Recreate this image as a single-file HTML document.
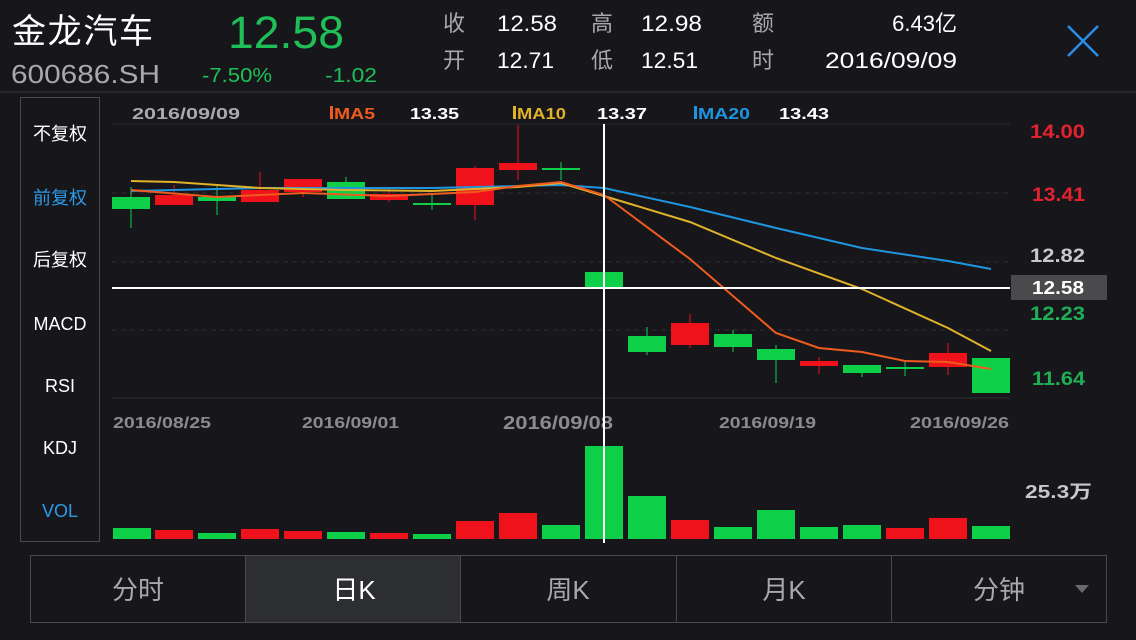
<!DOCTYPE html>
<html><head><meta charset="utf-8"><style>
html,body{margin:0;padding:0;background:#17171b;}
svg{display:block}
text{font-family:"Liberation Sans","Noto Sans CJK SC",sans-serif;}
</style></head><body>
<svg width="1136" height="640" viewBox="0 0 1136 640" xmlns="http://www.w3.org/2000/svg">
<rect width="1136" height="640" fill="#17171b"/>
<!-- header -->
<text x="12" y="43" font-size="34" fill="#fff" textLength="141">金龙汽车</text>
<text x="11" y="83" font-size="26" fill="#a8a9ad" textLength="149" lengthAdjust="spacingAndGlyphs">600686.SH</text>
<text x="228" y="48" font-size="45" fill="#1fbf58" textLength="116" lengthAdjust="spacingAndGlyphs">12.58</text>
<text x="202" y="82" font-size="20" fill="#1fbf58" textLength="70" lengthAdjust="spacingAndGlyphs">-7.50%</text>
<text x="325" y="82" font-size="20" fill="#1fbf58" textLength="52" lengthAdjust="spacingAndGlyphs">-1.02</text>
<g font-size="22">
<text x="443" y="31" fill="#a8a9ad">收</text><text x="497" y="31" fill="#fff" textLength="60" lengthAdjust="spacingAndGlyphs">12.58</text>
<text x="443" y="68" fill="#a8a9ad">开</text><text x="497" y="68" fill="#fff" textLength="57" lengthAdjust="spacingAndGlyphs">12.71</text>
<text x="591" y="31" fill="#a8a9ad">高</text><text x="641" y="31" fill="#fff" textLength="61" lengthAdjust="spacingAndGlyphs">12.98</text>
<text x="591" y="68" fill="#a8a9ad">低</text><text x="641" y="68" fill="#fff" textLength="57" lengthAdjust="spacingAndGlyphs">12.51</text>
<text x="752" y="31" fill="#a8a9ad">额</text><text x="957" y="31" fill="#fff" text-anchor="end">6.43亿</text>
<text x="752" y="68" fill="#a8a9ad">时</text><text x="825" y="68" fill="#fff" textLength="132" lengthAdjust="spacingAndGlyphs">2016/09/09</text>
</g>
<path d="M1068 26 L1098 56 M1098 26 L1068 56" stroke="#2a8de8" stroke-width="2.5"/>
<line x1="0" y1="92" x2="1136" y2="92" stroke="#3a3a3e" stroke-width="1"/>
<!-- left panel -->
<rect x="20.5" y="97.5" width="79" height="444" fill="none" stroke="#4a4a4e"/>
<g font-size="18" fill="#fff" text-anchor="middle">
<text x="60" y="140">不复权</text>
<text x="60" y="204" fill="#2a9be8">前复权</text>
<text x="60" y="266">后复权</text>
<text x="60" y="330">MACD</text>
<text x="60" y="392">RSI</text>
<text x="60" y="454">KDJ</text>
<text x="60" y="517" fill="#2a9be8">VOL</text>
</g>
<!-- legend -->
<g font-size="16" font-weight="bold" lengthAdjust="spacingAndGlyphs">
<text x="132" y="119" fill="#a8a9ad" textLength="108" lengthAdjust="spacingAndGlyphs">2016/09/09</text>
<rect x="330" y="106" width="3" height="13" fill="#ef5a1f"/><text x="334" y="119" fill="#ef5a1f" textLength="41" lengthAdjust="spacingAndGlyphs">MA5</text>
<text x="410" y="119" fill="#fff" textLength="49" lengthAdjust="spacingAndGlyphs">13.35</text>
<rect x="513" y="106" width="3" height="13" fill="#e0b22a"/><text x="517" y="119" fill="#e0b22a" textLength="49" lengthAdjust="spacingAndGlyphs">MA10</text>
<text x="597" y="119" fill="#fff" textLength="50" lengthAdjust="spacingAndGlyphs">13.37</text>
<rect x="694" y="106" width="3" height="13" fill="#1f95e0"/><text x="698" y="119" fill="#1f95e0" textLength="52" lengthAdjust="spacingAndGlyphs">MA20</text>
<text x="779" y="119" fill="#fff" textLength="50" lengthAdjust="spacingAndGlyphs">13.43</text>
</g>
<!-- grid -->
<line x1="112" y1="124" x2="1010" y2="124" stroke="#2a2a2e"/>
<g stroke="#2e2e33" stroke-dasharray="5,4">
<line x1="112" y1="193" x2="1010" y2="193"/>
<line x1="112" y1="262" x2="1010" y2="262"/>
<line x1="112" y1="330" x2="1010" y2="330"/>
</g>
<line x1="112" y1="398" x2="1010" y2="398" stroke="#2e2e33"/>
<!-- price labels -->
<g font-size="19" font-weight="bold">
<text x="1030" y="138" fill="#e3222f" textLength="55" lengthAdjust="spacingAndGlyphs">14.00</text>
<text x="1032" y="201" fill="#e3222f" textLength="53" lengthAdjust="spacingAndGlyphs">13.41</text>
<text x="1030" y="262" fill="#c8c8cc" textLength="55" lengthAdjust="spacingAndGlyphs">12.82</text>
<text x="1030" y="320" fill="#1fae55" textLength="55" lengthAdjust="spacingAndGlyphs">12.23</text>
<text x="1032" y="385" fill="#1fae55" textLength="53" lengthAdjust="spacingAndGlyphs">11.64</text>
</g>
<rect x="1011" y="275" width="96" height="25" fill="#4a4a4c"/>
<text x="1032" y="294" font-size="18" font-weight="bold" fill="#fff" textLength="52" lengthAdjust="spacingAndGlyphs">12.58</text>
<!-- candles -->
<g stroke-width="1">
<g fill="#0ed048" stroke="#0ed048">
<line x1="131" y1="187" x2="131" y2="228"/><rect x="112" y="197" width="38" height="12" stroke="none"/>
<line x1="217" y1="185" x2="217" y2="215"/><rect x="198" y="197" width="38" height="4" stroke="none"/>
<line x1="346" y1="177" x2="346" y2="199"/><rect x="327" y="182" width="38" height="17" stroke="none"/>
<line x1="432" y1="195" x2="432" y2="210"/><rect x="413" y="203" width="38" height="2" stroke="none"/>
<line x1="561" y1="162" x2="561" y2="180"/><rect x="542" y="168" width="38" height="2" stroke="none"/>
<rect x="585" y="272" width="38" height="15" stroke="none"/>
<line x1="647" y1="327" x2="647" y2="355"/><rect x="628" y="336" width="38" height="16" stroke="none"/>
<line x1="733" y1="330" x2="733" y2="352"/><rect x="714" y="334" width="38" height="13" stroke="none"/>
<line x1="776" y1="345" x2="776" y2="383"/><rect x="757" y="349" width="38" height="11" stroke="none"/>
<line x1="862" y1="365" x2="862" y2="377"/><rect x="843" y="365" width="38" height="8" stroke="none"/>
<line x1="905" y1="361" x2="905" y2="376"/><rect x="886" y="367" width="38" height="2" stroke="none"/>
<rect x="972" y="358" width="38" height="35" stroke="none"/>
</g>
<g fill="#f0121b" stroke="#f0121b">
<line x1="174" y1="185" x2="174" y2="205"/><rect x="155" y="195" width="38" height="10" stroke="none"/>
<line x1="260" y1="172" x2="260" y2="202"/><rect x="241" y="190" width="38" height="12" stroke="none"/>
<line x1="303" y1="179" x2="303" y2="197"/><rect x="284" y="179" width="38" height="13" stroke="none"/>
<line x1="389" y1="188" x2="389" y2="202"/><rect x="370" y="194" width="38" height="6" stroke="none"/>
<line x1="475" y1="166" x2="475" y2="220"/><rect x="456" y="168" width="38" height="37" stroke="none"/>
<line x1="518" y1="125" x2="518" y2="180"/><rect x="499" y="163" width="38" height="7" stroke="none"/>
<line x1="690" y1="314" x2="690" y2="348"/><rect x="671" y="323" width="38" height="22" stroke="none"/>
<line x1="819" y1="357" x2="819" y2="374"/><rect x="800" y="361" width="38" height="5" stroke="none"/>
<line x1="948" y1="343" x2="948" y2="375"/><rect x="929" y="353" width="38" height="14" stroke="none"/>
</g>
</g>
<!-- MAs -->
<g fill="none" stroke-width="2">
<polyline stroke="#1f95e0" points="131,191 260,188 432,188 518,186 561,185 604,188 690,207 776,228 862,248 948,261 991,269"/>
<polyline stroke="#e0b22a" points="131,181 174,182 260,188 346,190 432,191 518,187 561,183 604,196 690,222 776,258 862,289 948,328 991,351"/>
<polyline stroke="#ef5a1f" points="131,190 217,197 303,193 389,196 475,192 518,186 561,182 604,195 690,259 776,333 819,348 862,352 905,361 948,362 991,369"/>
</g>
<!-- dates -->
<g font-size="16" font-weight="bold" fill="#8a8b90">
<text x="113" y="428" textLength="98" lengthAdjust="spacingAndGlyphs">2016/08/25</text>
<text x="302" y="428" textLength="97" lengthAdjust="spacingAndGlyphs">2016/09/01</text>
<text x="503" y="429" font-size="18" textLength="110" lengthAdjust="spacingAndGlyphs">2016/09/08</text>
<text x="719" y="428" textLength="97" lengthAdjust="spacingAndGlyphs">2016/09/19</text>
<text x="910" y="428" textLength="99" lengthAdjust="spacingAndGlyphs">2016/09/26</text>
</g>
<!-- volume -->
<g>
<rect x="113" y="528" width="38" height="11" fill="#0ed048"/>
<rect x="155" y="530" width="38" height="9" fill="#f0121b"/>
<rect x="198" y="533" width="38" height="6" fill="#0ed048"/>
<rect x="241" y="529" width="38" height="10" fill="#f0121b"/>
<rect x="284" y="531" width="38" height="8" fill="#f0121b"/>
<rect x="327" y="532" width="38" height="7" fill="#0ed048"/>
<rect x="370" y="533" width="38" height="6" fill="#f0121b"/>
<rect x="413" y="534" width="38" height="5" fill="#0ed048"/>
<rect x="456" y="521" width="38" height="18" fill="#f0121b"/>
<rect x="499" y="513" width="38" height="26" fill="#f0121b"/>
<rect x="542" y="525" width="38" height="14" fill="#0ed048"/>
<rect x="585" y="446" width="38" height="93" fill="#0ed048"/>
<rect x="628" y="496" width="38" height="43" fill="#0ed048"/>
<rect x="671" y="520" width="38" height="19" fill="#f0121b"/>
<rect x="714" y="527" width="38" height="12" fill="#0ed048"/>
<rect x="757" y="510" width="38" height="29" fill="#0ed048"/>
<rect x="800" y="527" width="38" height="12" fill="#0ed048"/>
<rect x="843" y="525" width="38" height="14" fill="#0ed048"/>
<rect x="886" y="528" width="38" height="11" fill="#f0121b"/>
<rect x="929" y="518" width="38" height="21" fill="#f0121b"/>
<rect x="972" y="526" width="38" height="13" fill="#0ed048"/>
</g>
<text x="1025" y="498" font-size="18" font-weight="bold" fill="#c8c8cc" textLength="67" lengthAdjust="spacingAndGlyphs">25.3万</text>
<!-- crosshair -->
<line x1="604" y1="124" x2="604" y2="543" stroke="#fff" stroke-width="2"/>
<line x1="112" y1="288" x2="1010" y2="288" stroke="#fff" stroke-width="2"/>
<!-- tabs -->
<rect x="246" y="556" width="214" height="66" fill="#2c2e31"/>
<rect x="30.5" y="555.5" width="1076" height="67" fill="none" stroke="#4a4a4e"/>
<g stroke="#4a4a4e"><line x1="245.5" y1="556" x2="245.5" y2="622"/><line x1="460.5" y1="556" x2="460.5" y2="622"/><line x1="676.5" y1="556" x2="676.5" y2="622"/><line x1="891.5" y1="556" x2="891.5" y2="622"/></g>
<g font-size="26" text-anchor="middle" fill="#a8a9ad">
<text x="138" y="599">分时</text>
<text x="354" y="599" fill="#fff">日K</text>
<text x="568" y="599">周K</text>
<text x="784" y="599">月K</text>
<text x="999" y="599">分钟</text>
</g>
<path d="M1075 585 L1089 585 L1082 593 Z" fill="#6a6a6e"/>
</svg>
</body></html>
